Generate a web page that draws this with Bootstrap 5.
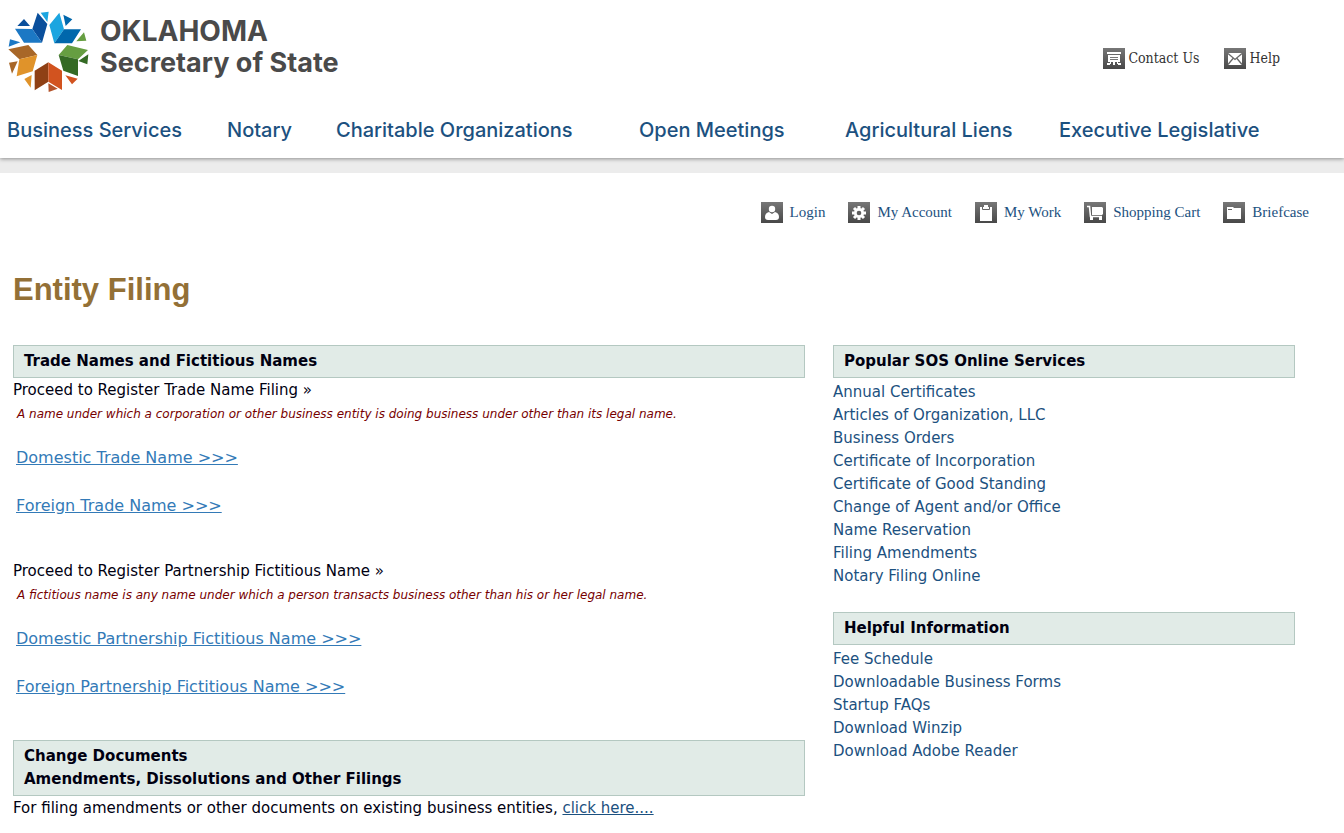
<!DOCTYPE html>
<html lang="en">
<head>
<meta charset="utf-8">
<meta name="viewport" content="width=device-width, initial-scale=1">
<title>Oklahoma Secretary of State - Entity Filing</title>
<link href="https://cdn.jsdelivr.net/npm/bootstrap@5.3.0/dist/css/bootstrap.min.css" rel="stylesheet">
<style>
body{font-family:"DejaVu Sans",sans-serif;font-size:15px;line-height:23px;color:#001;background:#fff}
a{color:#1c5180;text-decoration:none}
a:hover{text-decoration:underline}
.site-header{box-shadow:0 1px 4px rgba(0,0,0,.4);position:relative}
.brand-row{min-height:108px;padding:0 64px 0 0}
.wordmark{font-family:Inter,sans-serif;color:#4a4a4a;line-height:31px;padding-top:16px}
.wordmark .state{font-size:28px;font-weight:700}
.wordmark .office{font-size:27px;font-weight:700}
.contact-links{gap:25px;padding-top:47px;font-family:"DejaVu Serif Condensed","DejaVu Serif",serif;font-size:14px}
.contact-links a{gap:3px;color:#333}
.main-nav{display:grid;grid-template-columns:220fr 109fr 303fr 206fr 214fr 285fr;padding:9px 0 14px 7px;font-family:Inter,sans-serif;font-size:20px;line-height:27px;font-weight:500}
.grey-strip{height:15px;background:#ececec}
.user-links{gap:23px;padding:28px 35px 0 0;font-family:"Liberation Serif",serif;font-size:15px}
.user-links a{gap:7px}
.icon{width:22px;height:21px;flex:none;display:block}
.page-body{padding:0 49px 24px 13px}
h1{font:700 31px/36px "Liberation Sans",sans-serif;color:#937036;margin:48px 0 37px}
.columns{display:grid;grid-template-columns:792fr 462fr;column-gap:28px}
.panel-head{background:#e1ebe7;border:1px solid #b4c8c1;padding:4px 10px;margin:0;font-size:15px;line-height:23px;font-weight:700}
.intro{line-height:24px}
.definition{font-size:12px;line-height:16px;font-style:italic;color:#700;padding-left:4px;margin:4px 0 24px}
.filing{font-size:16px;line-height:24px;padding-left:3px;margin:0 0 24px}
.filing a{color:#337ab7;text-decoration:underline}
.filings{padding-bottom:17px}
.service-list{margin:3px 0 24px}
</style>
<script src="https://cdn.jsdelivr.net/npm/bootstrap@5.3.0/dist/js/bootstrap.bundle.min.js"></script>
</head>
<body>
<svg width="0" height="0" class="position-absolute" aria-hidden="true"><defs><linearGradient id="tile" x1="0" y1="0" x2="0" y2="1"><stop offset="0" stop-color="#777"/><stop offset="1" stop-color="#484848"/></linearGradient></defs></svg>
<header class="site-header bg-white">
 <div class="brand-row d-flex justify-content-between align-items-start">
  <a href="#" class="d-flex align-items-start text-decoration-none">
   <svg width="100" height="100" viewBox="0 0 300 300" aria-hidden="true">
    <path fill="#0a4f9c" d="M113 38l29 34-16 56-29-41zM72 57l18 21-38 0z"/><path fill="#1c78c4" d="M45 86l52 1 29 41H72zM30 118l31 9-35 13z"/>
    <path fill="#1ba5e0" d="M178 38l14 50-29 42-15-55zM122 38l24-3-4 31z"/><path fill="#0067ac" d="M192 88h51l-27 42h-53zM190 44l27 14-20 20z"/>
    <path fill="#669e41" d="M176 165l26-30 62 15-30 28zM252 97l7 25-30 2z"/><path fill="#346a24" d="M176 165l58 13v50l-44-16zM265 163l-3 30-27-10z"/>
    <path fill="#8f4015" d="M145 187v58l-41 26v-59z"/><path fill="#b4532a" d="M145 250l28 16-27 10z"/><path fill="#d2531f" d="M145 187l41 25v58l-41-25zM196 226l37 10-17 17z"/>
    <path fill="#a86728" d="M25 148l60-13 27 30-54 13zM27 188l26-4-17 37z"/><path fill="#e0932a" d="M58 178l54-13-14 49-48 15zM73 237l22-12-3 38z"/>
   </svg>
   <span class="wordmark d-flex flex-column"><span class="state">OKLAHOMA</span><span class="office">Secretary of State</span></span>
  </a>
  <div class="contact-links d-flex">
   <a href="#" class="d-flex align-items-center"><svg class="icon" viewBox="0 0 22 21"><path fill="url(#tile)" d="M0 0h22v21H0z"/><path fill="#fff" d="M4 4h14v2H4zM5 7h12v7H5zM4 15h3v2H4zM7 14h1v2H7zM10 14h2v3h-2zM14 14h1v2h-1zM15 15h3v2h-3z"/><path stroke="#777" d="M7 9.500h8M7 11.500h8"/></svg>Contact Us</a>
   <a href="#" class="d-flex align-items-center"><svg class="icon" viewBox="0 0 22 21"><path fill="url(#tile)" d="M0 0h22v21H0z"/><path fill="#fff" d="M4 5h14v12H4z"/><path fill="none" stroke="#666" stroke-width="1.300" d="M4 5.500l7 6 7-6M4 16.500l5-6M18 16.500l-5-6"/></svg>Help</a>
  </div>
 </div>
 <nav class="main-nav" aria-label="Main"><a href="#">Business Services</a><a href="#">Notary</a><a href="#">Charitable Organizations</a><a href="#">Open Meetings</a><a href="#">Agricultural Liens</a><a href="#">Executive Legislative</a></nav>
</header>
<div class="grey-strip"></div>
<nav class="user-links d-flex justify-content-end" aria-label="Account">
 <a href="#" class="d-flex align-items-center"><svg class="icon" viewBox="0 0 22 21"><path fill="url(#tile)" d="M0 0h22v21H0z"/><circle cx="11" cy="7" r="3.200" fill="#fff"/><path fill="#fff" d="M4 15q0-4 4-5l3 2 3-2q4 1 4 5 0 3-3 3H7q-3 0-3-3z"/></svg>Login</a>
 <a href="#" class="d-flex align-items-center"><svg class="icon" viewBox="0 0 22 21"><path fill="url(#tile)" d="M0 0h22v21H0z"/><path stroke="#fff" stroke-width="3" d="M11 4v14M4 11h14M6 6l10 10M16 6L6 16"/><circle cx="11" cy="11" r="5" fill="#fff"/><circle cx="11" cy="11" r="2.300" fill="#5e5e5e"/></svg>My Account</a>
 <a href="#" class="d-flex align-items-center"><svg class="icon" viewBox="0 0 22 21"><path fill="url(#tile)" d="M0 0h22v21H0z"/><path fill="#fff" d="M5 5h12v14H5zM9 3h4v3H9z"/><path fill="none" stroke="#666" d="M7.500 5v2.500h7V5"/></svg>My Work</a>
 <a href="#" class="d-flex align-items-center"><svg class="icon" viewBox="0 0 22 21"><path fill="url(#tile)" d="M0 0h22v21H0z"/><path fill="#fff" d="M8 5h10l1 1v6l-1 1H8z"/><path fill="none" stroke="#fff" stroke-width="1.600" d="M3 4.500h2.500l1 10H18"/><path fill="#fff" d="M6 15h3v3H6zM15 15h3v3h-3z"/></svg>Shopping Cart</a>
 <a href="#" class="d-flex align-items-center"><svg class="icon" viewBox="0 0 22 21"><path fill="url(#tile)" d="M0 0h22v21H0z"/><path fill="#fff" d="M4 5h6l1 1h7v11H4z"/><path stroke="#666" d="M5 7.500h4"/></svg>Briefcase</a>
</nav>
<main class="page-body">
 <h1>Entity Filing</h1>
 <div class="columns">
  <div>
   <section class="filings">
    <h2 class="panel-head">Trade Names and Fictitious Names</h2>
    <div class="intro">Proceed to Register Trade Name Filing »</div>
    <p class="definition">A name under which a corporation or other business entity is doing business under other than its legal name.</p>
    <p class="filing"><a href="#">Domestic Trade Name &gt;&gt;&gt;</a></p>
    <p class="filing"><a href="#">Foreign Trade Name &gt;&gt;&gt;</a></p>
   </section>
   <section class="filings">
    <div class="intro">Proceed to Register Partnership Fictitious Name »</div>
    <p class="definition">A fictitious name is any name under which a person transacts business other than his or her legal name.</p>
    <p class="filing"><a href="#">Domestic Partnership Fictitious Name &gt;&gt;&gt;</a></p>
    <p class="filing"><a href="#">Foreign Partnership Fictitious Name &gt;&gt;&gt;</a></p>
   </section>
   <section>
    <h2 class="panel-head">Change Documents<br>Amendments, Dissolutions and Other Filings</h2>
    <div class="intro">For filing amendments or other documents on existing business entities, <a href="#" class="text-decoration-underline">click here....</a></div>
   </section>
  </div>
  <aside>
   <section>
    <h2 class="panel-head">Popular SOS Online Services</h2>
    <ul class="list-unstyled service-list"><li><a href="#">Annual Certificates</a></li><li><a href="#">Articles of Organization, LLC</a></li><li><a href="#">Business Orders</a></li><li><a href="#">Certificate of Incorporation</a></li><li><a href="#">Certificate of Good Standing</a></li><li><a href="#">Change of Agent and/or Office</a></li><li><a href="#">Name Reservation</a></li><li><a href="#">Filing Amendments</a></li><li><a href="#">Notary Filing Online</a></li></ul>
   </section>
   <section>
    <h2 class="panel-head">Helpful Information</h2>
    <ul class="list-unstyled service-list"><li><a href="#">Fee Schedule</a></li><li><a href="#">Downloadable Business Forms</a></li><li><a href="#">Startup FAQs</a></li><li><a href="#">Download Winzip</a></li><li><a href="#">Download Adobe Reader</a></li></ul>
   </section>
  </aside>
 </div>
</main>
</body>
</html>
